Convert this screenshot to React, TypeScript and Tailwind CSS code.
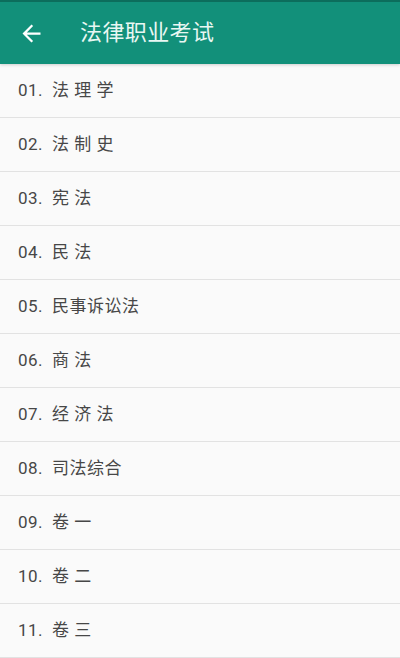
const subjects = [
  ["01.", "法 理 学"],
  ["02.", "法 制 史"],
  ["03.", "宪 法"],
  ["04.", "民 法"],
  ["05.", "民事诉讼法"],
  ["06.", "商 法"],
  ["07.", "经 济 法"],
  ["08.", "司法综合"],
  ["09.", "卷 一"],
  ["10.", "卷 二"],
  ["11.", "卷 三"],
]

function BackArrow() {
  return (
    <svg width="27" height="27" viewBox="0 0 24 24" fill="#ffffff">
      <path d="M20 11H7.83l5.59-5.59L12 4l-8 8 8 8 1.41-1.41L7.83 13H20v-2z" />
    </svg>
  )
}

export default function App() {
  return (
    <div
      className="flex h-[658px] w-[400px] flex-col overflow-hidden bg-[#fafafa]"
      style={{ fontFamily: 'Roboto, "Noto Sans CJK SC", sans-serif' }}
    >
      <header className="relative z-10 flex h-[64px] shrink-0 items-center border-t-2 border-[#0c6d5c] bg-[#12907a] shadow-[0_1px_3px_rgba(0,0,0,0.18)]">
        <div className="flex w-[80px] items-center pl-[18px]">
          <BackArrow />
        </div>
        <h1 className="text-[22px] leading-none tracking-[0.4px] text-[#e8f7f3]">法律职业考试</h1>
      </header>
      <ul className="flex flex-col">
        {subjects.map(([num, name]) => (
          <li
            key={num}
            className="flex h-[54px] shrink-0 items-center border-b border-[#e2e2e2] pl-[18px] text-[17px] text-[#474747] whitespace-pre"
          >
            <span className="tracking-[0.5px]">{num}</span>
            <span className="ml-[9px] tracking-[0.5px]">{name}</span>
          </li>
        ))}
      </ul>
    </div>
  )
}
